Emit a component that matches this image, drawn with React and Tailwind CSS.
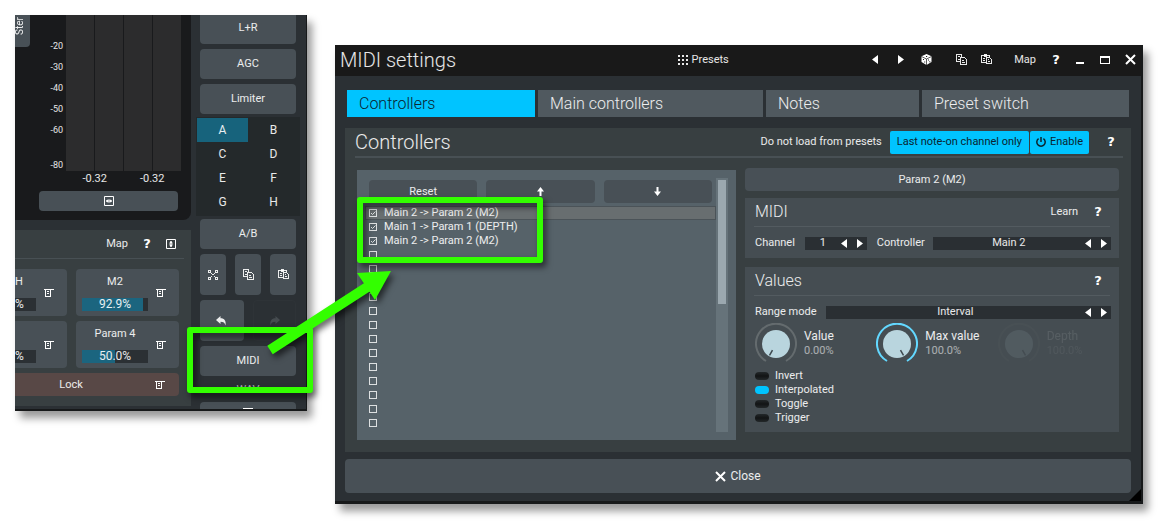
import React, { useState } from "react";

const LIST = [
  "Main 2 -> Param 2 (M2)",
  "Main 1 -> Param 1 (DEPTH)",
  "Main 2 -> Param 2 (M2)",
  ...Array(13).fill(""),
];

const TABS = ["Controllers", "Main controllers", "Notes", "Preset switch"];

// ── Icons ─────────────────────────────────────────────────────────────────────
const CopyIcon = () => (
  <svg width="11" height="11" viewBox="0 0 11 11" shapeRendering="crispEdges" fill="none" stroke="currentColor">
    <path d="M4 7.5H0.5V0.5H5.5V3" />
    <path d="M2 2.5H4M2 5.5H4" />
    <path d="M4.5 3.5H8.5M9.5 4V5M10.5 5V10.5H4.5V3" />
    <path d="M6 6.5H8M6 8.5H9" />
  </svg>
);

const PasteIcon = () => (
  <svg width="11" height="11" viewBox="0 0 11 11" shapeRendering="crispEdges" fill="none" stroke="currentColor">
    <path d="M5 8.5H0.5V1.5H8.5V3" />
    <path d="M3 0.5H6M3 1.5H6M3 2.5H6M2 4.5H4M2 6.5H4" />
    <path d="M5.5 3.5H8.5M9.5 4V5M10.5 5V9.5H5.5V3" />
    <path d="M7 5.5H8M7 7.5H9" />
  </svg>
);

const RandomIcon = () => (
  <svg width="10" height="10" viewBox="0 0 10 10" shapeRendering="crispEdges" fill="none" stroke="currentColor">
    <path d="M0.5 0.5H2.5V2.5H0.5ZM7.5 0.5H9.5V2.5H7.5ZM0.5 7.5H2.5V9.5H0.5ZM7.5 7.5H9.5V9.5H7.5Z" />
    <path d="M3 3.5H4M6 3.5H7M3 6.5H4M6 6.5H7M4 4.5H6" />
  </svg>
);

const DiceIcon = () => (
  <svg width="11" height="11" viewBox="0 0 11 11">
    <path d="M5.5 0L10.5 2.3V8L5.5 11L0.5 8V2.3Z" fill="#fff" />
    <path d="M0.5 2.5L5.5 5L10.5 2.5M5.5 5V11" stroke="#191919" fill="none" strokeWidth="0.7" />
    <path d="M5 2H6.2V3H5ZM2 5H3V6H2ZM3.2 7.4H4.2V8.4H3.2ZM7 5.5H8V6.5H7ZM8.3 7.2H9.3V8.2H8.3Z" fill="#191919" />
  </svg>
);

const MenuIcon = () => (
  <svg width="10" height="8" viewBox="0 0 10 8" shapeRendering="crispEdges" fill="none" stroke="#fff">
    <path d="M0 0.5H10" />
    <path d="M1.5 0V7.5H6.5V0M3 2.5H5M3 4.5H5" />
  </svg>
);

const FitIcon = ({ vertical }) => (
  <svg
    width="10"
    height="10"
    viewBox="0 0 10 10"
    className={vertical ? "rotate-90" : ""}
    fill="none"
    stroke="#fff"
  >
    <path d="M0.5 0.5H9.5V9.5H0.5Z" />
    <path d="M2 5H8" />
    <path d="M4.5 3V7L1.8 5ZM5.5 3V7L8.2 5Z" fill="#fff" stroke="none" />
  </svg>
);

const HistoryIcon = ({ redo }) => (
  <svg width="11" height="10" viewBox="0 0 11 10" className={redo ? "-scale-x-100" : ""}>
    <path d="M0 4L4.5 0V2.3C8.5 2.3 10.3 5 9.5 9.5C8.8 6.8 7.5 5.8 4.5 5.8V8Z" fill="currentColor" />
  </svg>
);

const CloseIcon = () => (
  <svg width="11" height="11" viewBox="0 0 11 11" fill="none" stroke="#fff" strokeWidth="2">
    <path d="M1 1L10 10M10 1L1 10" />
  </svg>
);

const Triangle = ({ right }) => (
  <svg width="6" height="9" viewBox="0 0 6 9" className={right ? "rotate-180" : ""}>
    <path d="M6 0V9L0 4.5Z" fill="#fff" />
  </svg>
);

const MoveIcon = ({ down }) => (
  <svg width="7" height="9" viewBox="0 0 7 9" className={down ? "rotate-180" : ""}>
    <path d="M3.5 0L7 4.5H4.5V9H2.5V4.5H0Z" fill="#fff" />
  </svg>
);

const PowerIcon = () => (
  <svg width="10" height="10" viewBox="0 0 10 10" fill="none" stroke="currentColor" strokeWidth="1.5">
    <path d="M2.6 1.6A4.2 4.2 0 1 0 7.4 1.6M5 0V5" />
  </svg>
);

const GridIcon = () => (
  <svg width="10" height="10" viewBox="0 0 10 10" shapeRendering="crispEdges" fill="currentColor">
    {[0, 4, 8].map((y) => [0, 4, 8].map((x) => <rect key={`${x}-${y}`} x={x} y={y} width="2" height="2" />))}
  </svg>
);

// ── Shared controls ───────────────────────────────────────────────────────────
const Button = ({ className = "", children, ...rest }) => (
  <button className={`flex items-center justify-center rounded bg-[#485056] ${className}`} {...rest}>
    {children}
  </button>
);

const Help = () => (
  <button
    className="w-6 text-center font-['DejaVu_Sans'] text-[13px] leading-4 font-bold text-white"
    aria-label="Help"
  >
    ?
  </button>
);

const Stepper = ({ value, label, className = "" }) => (
  <div className={`flex h-[13px] items-center bg-[#2a2f33] pr-1 ${className}`}>
    <input readOnly aria-label={label} defaultValue={value} className="w-0 min-w-0 flex-1 text-center outline-none" />
    <div className="flex gap-[10px]">
      <button aria-label={`Previous ${label}`}><Triangle /></button>
      <button aria-label={`Next ${label}`}><Triangle right /></button>
    </div>
  </div>
);

const ParamCell = ({ name, value, amount }) => (
  <div className="flex h-[47px] items-center rounded bg-[#485056] pl-1.5">
    <div className="w-[66px] text-center">
      <p className="mb-[9px] leading-[14px]">{name}</p>
      <div className="relative h-[13px] bg-[#2b3034]">
        <div className="h-full bg-[#1b657f]" style={{ width: `${amount}%` }} />
        <span className="absolute inset-0 text-xs leading-[13px]">{value}</span>
      </div>
    </div>
    <button className="ml-2" aria-label={`${name} menu`}><MenuIcon /></button>
  </div>
);

// Cell of the column that is scrolled half out of view
const ParamEdge = ({ name }) => (
  <div className="flex h-[47px] items-center rounded-r bg-[#485056]">
    <div className="w-[21px]">
      <p className="mb-[9px] h-[14px] leading-[14px]">{name}</p>
      <p className="h-[13px] bg-[#2b3034] text-xs leading-[13px]">%</p>
    </div>
    <button className="ml-2" aria-label="Parameter menu"><MenuIcon /></button>
  </div>
);

// ── Plugin window (left) ──────────────────────────────────────────────────────
const Meter = () => (
  <div className="h-[205px] rounded-br-lg bg-[#191a1c]">
    <div className="flex h-[156px]">
      <button className="flex h-8 w-[15px] items-end rounded-br bg-[#485056] pb-3">
        <span className="rotate-180 text-[10px] leading-[10px] [writing-mode:vertical-rl]">Ster</span>
      </button>
      <div className="flex w-9 flex-col pt-[21px] pr-[3px] text-right text-[9px] leading-[21px]">
        {["-20", "-30", "-40", "-50", "-60"].map((n) => <span key={n}>{n}</span>)}
        <span className="mt-[14px]">-80</span>
      </div>
      <div className="grid w-[115px] grid-cols-4 gap-px">
        {[0, 1, 2, 3].map((n) => <div key={n} className="bg-[#2c2c2d]" />)}
      </div>
    </div>
    <div className="ml-[51px] grid w-[115px] grid-cols-2 text-center leading-4">
      <span>-0.32</span>
      <span>-0.32</span>
    </div>
    <Button className="mt-1 mr-[13px] ml-6 h-5 w-[139px]" aria-label="Fit width"><FitIcon /></Button>
  </div>
);

const PluginWindow = () => {
  const [slot, setSlot] = useState("A");
  return (
    <section className="flex h-[396px] overflow-hidden border-r border-b-2 border-[#17191a] bg-[#2b3034] text-white/90 shadow-[5px_7px_8px_rgba(0,0,0,0.4)]">
      <div className="w-[176px] shrink-0">
        <Meter />
        <div className="mt-2.5 h-44 bg-[#383f41] pr-3">
          <div className="-mr-[5px] flex h-[29px] items-center justify-end gap-[7px] border-b border-[#485054] pr-2">
            <button>Map</button>
            <Help />
            <button aria-label="Fit height"><FitIcon vertical /></button>
          </div>
          <div className="mt-2.5 grid grid-cols-[52fr_103fr] gap-x-[9px] gap-y-[5px]">
            <ParamEdge name="H" />
            <ParamCell name="M2" value="92.9%" amount={92.9} />
            <ParamEdge name="" />
            <ParamCell name="Param 4" value="50.0%" amount={50} />
            <div className="col-span-2 flex h-[23px] items-center rounded-r bg-[#584846] pr-[14px]">
              <button className="mr-7 flex-1">Lock</button>
              <button aria-label="Lock menu"><MenuIcon /></button>
            </div>
          </div>
        </div>
      </div>

      <div className="flex flex-1 flex-col pr-2.5 pl-[9px]">
        <Button className="h-[29px] shrink-0 rounded-t-none pb-1">L+R</Button>
        <Button className="mt-[5px] h-[30px] shrink-0">AGC</Button>
        <Button className="mt-[5px] h-[30px] shrink-0">Limiter</Button>
        <div className="-mx-1 mt-[3px] mb-[3px] grid grid-cols-2 bg-[#24292b] p-px pb-0.5 text-xs">
          {["A", "B", "C", "D", "E", "F", "G", "H"].map((s) => (
            <button key={s} onClick={() => setSlot(s)} className={`h-6 ${slot === s ? "bg-[#17637c]" : ""}`}>
              {s}
            </button>
          ))}
        </div>
        <Button className="h-[30px] shrink-0">A/B</Button>
        <div className="mt-[5px] grid grid-cols-3 gap-[9px]">
          <Button className="h-[41px]" aria-label="Random"><RandomIcon /></Button>
          <Button className="h-[41px]" aria-label="Copy"><CopyIcon /></Button>
          <Button className="h-[41px]" aria-label="Paste"><PasteIcon /></Button>
        </div>
        <div className="mt-[5px] grid grid-cols-2 gap-[9px]">
          <Button className="h-[41px]" aria-label="Undo"><HistoryIcon /></Button>
          <button disabled aria-label="Redo" className="flex h-[41px] items-center justify-center rounded border border-[#2e3337] text-[#454b4f]">
            <HistoryIcon redo />
          </button>
        </div>
        <Button className="mt-[5px] h-[30px] shrink-0">MIDI</Button>
        <p className="mt-1.5 h-5 shrink-0 text-center leading-4 text-white/60">WAV</p>
        <Button className="h-[30px] shrink-0 items-start pt-1.5" aria-label="More"><MenuIcon /></Button>
      </div>
    </section>
  );
};

// ── MIDI settings window (right) ──────────────────────────────────────────────
const TitleBar = () => (
  <header className="flex h-[31px] items-center bg-[#191919] pb-0.5">
    <h1 className="w-[43%] pl-[5px] font-[Roboto] text-xl leading-6 font-light">MIDI settings</h1>
    <button className="flex items-center gap-1 -ml-1"><GridIcon />Presets</button>
    <div className="flex flex-1 items-center justify-end pr-[5px]">
      <button className="mr-5" aria-label="Previous preset"><Triangle /></button>
      <button className="mr-[17px]" aria-label="Next preset"><Triangle right /></button>
      <button className="mr-6" aria-label="Random preset"><DiceIcon /></button>
      <button className="mr-[14px]" aria-label="Copy"><CopyIcon /></button>
      <button className="mr-[22px]" aria-label="Paste"><PasteIcon /></button>
      <button className="mr-2">Map</button>
      <Help />
      <button className="mr-4 ml-2 h-[9px] w-2 border-b-2 border-white" aria-label="Minimize" />
      <button className="mr-[15px] h-2 w-2.5 border border-t-2 border-white" aria-label="Maximize" />
      <button aria-label="Close window"><CloseIcon /></button>
    </div>
  </header>
);

const ControllerList = () => (
  <div className="flex bg-[#566269] px-2 pt-2 pb-2">
    <div className="min-w-0 flex-1">
      <div className="mt-0.5 mr-1 ml-1 grid grid-cols-3 gap-[9px]">
        <Button className="h-[23px]">Reset</Button>
        <Button className="h-[23px]" aria-label="Move up"><MoveIcon /></Button>
        <Button className="h-[23px]" aria-label="Move down"><MoveIcon down /></Button>
      </div>
      <ul className="mt-[3px] mb-0.5">
        {LIST.map((name, i) => (
          <li key={i} className={i === 0 ? "bg-[#686e70] outline outline-[#4b5358] -outline-offset-1" : ""}>
            <label className="flex h-[14px] items-center gap-[7px] pl-1 leading-[14px]">
              <input
                type="checkbox"
                defaultChecked={name !== ""}
                aria-label={name || `Empty slot ${i + 1}`}
                className="peer h-2 w-2 appearance-none border border-[#dde0e1]"
              />
              <svg viewBox="0 0 8 8" className="-ml-[15px] hidden h-2 w-2 peer-checked:block" fill="none" stroke="#dde0e1">
                <path d="M2 4L3.5 5.5L6.5 2.5" />
              </svg>
              {name}
            </label>
          </li>
        ))}
      </ul>
    </div>
    <div className="w-3 bg-[#66737a] px-0.5 pt-0.5">
      <div className="h-[124px] bg-[#9ba8af]" />
    </div>
  </div>
);

const Knob = ({ name, value, angle, color, disabled }) => (
  <div className={`flex gap-[7px] ${disabled ? "opacity-10" : ""}`}>
    <svg width="42" height="42" viewBox="0 0 42 42" fill="none">
      <path d="M11 38A20 20 0 1 1 31 38" stroke={color} strokeWidth="2" />
      <circle cx="21" cy="21" r="14" fill="#b9d5de" />
      <path d="M21 28V34" stroke="#3d484e" strokeWidth="1.5" transform={`rotate(${angle} 21 21)`} />
    </svg>
    <div className="pt-[5px]">
      <p className="text-xs leading-4">{name}</p>
      <p className="text-[11px] leading-[14px] text-white/55">{value}</p>
    </div>
  </div>
);

const SectionHeader = ({ title, children }) => (
  <div className="mx-[9px] flex h-[29px] items-center border-b border-[#535b60]">
    <h3 className="flex-1 pl-px font-[Roboto] text-base leading-5 font-light">{title}</h3>
    {children}
  </div>
);

const Details = () => (
  <div>
    <Button className="-mt-0.5 h-[23px] w-full">Param 2 (M2)</Button>
    <section className="mt-[7px] h-[60px] bg-[#454d52]">
      <SectionHeader title="MIDI">
        <button className="mr-2">Learn</button>
        <Help />
      </SectionHeader>
      <div className="mt-2 flex h-4 items-center pr-2 pl-2.5">
        <span>Channel</span>
        <Stepper label="Channel" value="1" className="ml-2.5 w-[62px]" />
        <span className="ml-2.5">Controller</span>
        <Stepper label="Controller" value="Main 2" className="ml-2 flex-1" />
      </div>
    </section>
    <section className="mt-[9px] h-[165px] bg-[#454d52]">
      <SectionHeader title="Values"><Help /></SectionHeader>
      <div className="mt-2 flex h-4 items-center pr-2 pl-2.5">
        <span>Range mode</span>
        <Stepper label="Range mode" value="Interval" className="ml-[9px] flex-1" />
      </div>
      <div className="mt-[3px] grid grid-cols-3 pl-2.5">
        <Knob name="Value" value="0.00%" angle={30} color="#646b6e" />
        <Knob name="Max value" value="100.0%" angle={-30} color="#63d8ff" />
        <Knob name="Depth" value="100.0%" angle={-30} color="#646b6e" disabled />
      </div>
      <div className="mt-1 pl-2.5">
        {["Invert", "Interpolated", "Toggle", "Trigger"].map((name) => (
          <label key={name} className="flex h-[14px] items-center gap-1.5 leading-[14px]">
            <input
              type="checkbox"
              defaultChecked={name === "Interpolated"}
              className="h-2 w-[14px] appearance-none rounded bg-linear-to-b from-[#23282a] via-[#121415] to-[#23282a] checked:from-[#00c4ff] checked:via-[#00c4ff] checked:to-[#00c4ff]"
            />
            {name}
          </label>
        ))}
      </div>
    </section>
  </div>
);

const SettingsWindow = () => {
  const [tab, setTab] = useState("Controllers");
  return (
    <section className="relative mt-[30px] border-r-2 border-b-3 border-[#17191a] bg-[#2b3034] pb-2 text-white/90 shadow-[5px_7px_8px_rgba(0,0,0,0.4)]">
      <TitleBar />
      <nav className="mt-[14px] mr-3 ml-3 grid grid-cols-[188fr_225fr_153fr_207fr] gap-[3px]">
        {TABS.map((name) => (
          <button
            key={name}
            onClick={() => setTab(name)}
            className={`h-[27px] pl-3 text-left font-[Roboto] text-base font-light ${
              tab === name ? "bg-[#00c4ff] text-[#0b2530]" : "bg-[#50595f]"
            }`}
          >
            {name}
          </button>
        ))}
      </nav>
      <main className="mt-[11px] mr-2.5 ml-2.5 bg-[#383f41] pb-3">
        <div className="mr-2 ml-2.5 flex h-[30px] items-center border-b-2 border-[#485054]">
          <h2 className="flex-1 font-[Roboto] text-xl font-light">Controllers</h2>
          <button className="mr-2">Do not load from presets</button>
          <button className="h-[23px] rounded-xs bg-[#00c4ff] px-[7px] text-[#0b2530]">Last note-on channel only</button>
          <button className="mr-[10px] ml-px flex h-[23px] items-center gap-1 rounded-xs bg-[#00c4ff] px-1.5 text-[#0b2530]">
            <PowerIcon />
            Enable
          </button>
          <Help />
        </div>
        <div className="mt-3 mr-3 ml-3 grid grid-cols-[379fr_374fr] gap-[9px]">
          <ControllerList />
          <Details />
        </div>
      </main>
      <div className="mx-2.5 mt-[7px]">
        <Button className="h-[34px] w-full gap-1 text-xs"><CloseIcon />Close</Button>
      </div>
      <svg className="absolute right-0 bottom-0" width="12" height="12" viewBox="0 0 12 12">
        <path d="M12 0V12H0Z" fill="#000" />
      </svg>
    </section>
  );
};

// Highlight frames and the arrow that joins them
const Annotations = () => (
  <svg
    className="pointer-events-none absolute top-0 left-0 drop-shadow-[3px_4px_3px_rgba(0,0,0,0.6)]"
    width="560"
    height="420"
    viewBox="0 0 560 420"
    fill="none"
  >
    <rect x="190" y="330" width="120" height="60" stroke="#33ff00" strokeWidth="6" strokeLinejoin="round" />
    <rect x="360" y="200" width="180" height="60" stroke="#33ff00" strokeWidth="6" strokeLinejoin="round" />
    <path d="M270 350L372 284" stroke="#33ff00" strokeWidth="10" />
    <path d="M391 271L357 273L375 300Z" fill="#33ff00" />
  </svg>
);

const App = () => (
  <div className="relative grid min-h-screen grid-cols-[292fr_808fr] items-start gap-7 bg-white pt-[15px] pr-[27px] pl-[15px] font-[Roboto,'Liberation_Sans',sans-serif] text-[11px] leading-[14px]">
    <PluginWindow />
    <SettingsWindow />
    <Annotations />
  </div>
);

export default App;
